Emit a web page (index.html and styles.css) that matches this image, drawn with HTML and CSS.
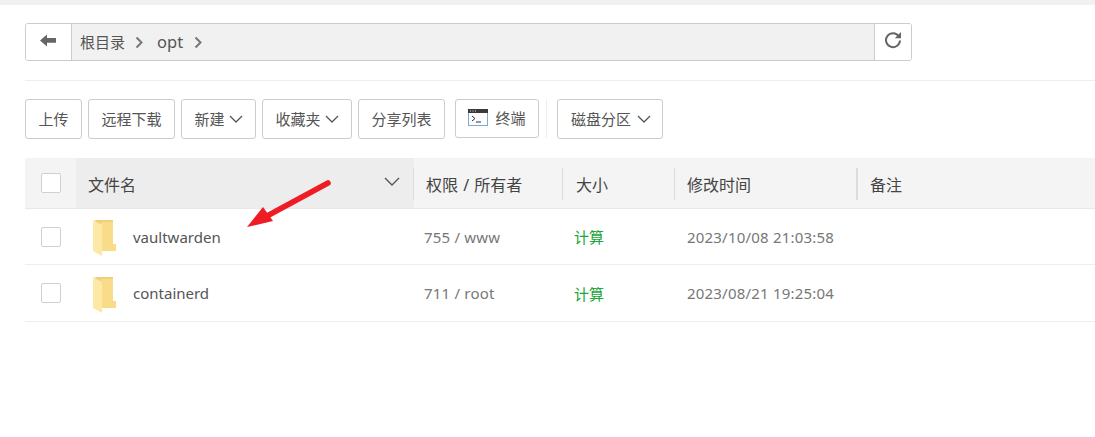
FILE: index.html
```html
<!DOCTYPE html>
<html lang="zh-CN">
<head>
<meta charset="UTF-8">
<meta name="viewport" content="width=device-width, initial-scale=1.0">
<title>文件管理</title>
<link rel="stylesheet" href="styles.css">
</head>
<body>

<div class="top-strip"></div>

<main class="files">
    <div class="path-row">
        <div class="path-box">
            <button class="path-back" aria-label="返回">
                <svg width="16" height="13" viewBox="0 0 16 13"><path d="M0 6.500 7 .5v3.600h9v4.600H7v3.800z" fill="#666"/></svg>
            </button>
            <div class="path-crumbs">
                <span class="crumb">根目录</span>
                <svg class="crumb-sep" width="9" height="13" viewBox="0 0 9 13"><path d="M1.500 1.500 6.500 6.500l-5 5" fill="none" stroke="#777" stroke-width="2"/></svg>
                <span class="crumb crumb-en">opt</span>
                <svg class="crumb-sep" width="9" height="13" viewBox="0 0 9 13"><path d="M1.500 1.500 6.500 6.500l-5 5" fill="none" stroke="#777" stroke-width="2"/></svg>
            </div>
            <button class="path-refresh" aria-label="刷新">
                <svg width="18" height="18" viewBox="0 0 18 18"><path d="M14.800 5.200A7 7 0 1 0 16 9.500" fill="none" stroke="#666" stroke-width="2"/><path d="M17 1v6.200h-6.200z" fill="#666"/></svg>
            </button>
        </div>
    </div>

    <div class="toolbar">
        <button class="btn btn-upload">上传</button>
        <button class="btn btn-remote">远程下载</button>
        <button class="btn btn-new">新建<svg class="caret" width="14" height="8" viewBox="0 0 14 8"><path d="M1 1l6 6 6-6" fill="none" stroke="#555" stroke-width="1.300"/></svg></button>
        <button class="btn btn-fav">收藏夹<svg class="caret" width="14" height="8" viewBox="0 0 14 8"><path d="M1 1l6 6 6-6" fill="none" stroke="#555" stroke-width="1.300"/></svg></button>
        <button class="btn btn-share">分享列表</button>
        <button class="btn btn-term">
            <svg width="20" height="17" viewBox="0 0 20 17"><rect x=".5" y=".5" width="19" height="16" fill="#fdfdfd" stroke="#7fa9d3"/><rect x="0" y="0" width="20" height="4" fill="#3a3a3a"/><path d="M2 2h1M4.500 2h1M7 2h1" stroke="#ddd" stroke-width="1"/><path d="M4 7l3 2.500L4 12" fill="none" stroke="#333" stroke-width="1"/><path d="M8 13h5" stroke="#333" stroke-width="1"/></svg>
            终端
        </button>
        <span class="toolbar-sep"></span>
        <button class="btn btn-disk">磁盘分区<svg class="caret caret-wide" width="14" height="8" viewBox="0 0 14 8"><path d="M1 1l6 6 6-6" fill="none" stroke="#555" stroke-width="1.300"/></svg></button>
    </div>

    <div class="file-table">
        <div class="row row-head">
            <div class="cell cell-check"><span class="check"></span></div>
            <div class="cell cell-name"><span class="head-label">文件名</span><svg class="sort" width="16" height="9" viewBox="0 0 16 9"><path d="M1 1l7 7 7-7" fill="none" stroke="#555" stroke-width="1.400"/></svg></div>
            <div class="cell cell-perm"><span class="head-label">权限 / 所有者</span></div>
            <div class="cell cell-size"><span class="head-label">大小</span></div>
            <div class="cell cell-time"><span class="head-label">修改时间</span></div>
            <div class="cell cell-note"><span class="head-label">备注</span></div>
        </div>
        <div class="row">
            <div class="cell cell-check"><span class="check"></span></div>
            <div class="cell cell-name">
                <svg class="folder" width="25" height="37" viewBox="0 0 25 37"><path d="M3 1h18v24h3v7H9z" fill="#f0cf78"/><path d="M9 3h12v22h3v7H9z" fill="#f9dc8a"/><path d="M1 1l9 5v31l-9-5z" fill="#fde9a6"/></svg>
                vaultwarden
            </div>
            <div class="cell cell-perm">755 / www</div>
            <div class="cell cell-size"><span class="calc">计算</span></div>
            <div class="cell cell-time">2023/10/08 21:03:58</div>
            <div class="cell cell-note"></div>
        </div>
        <div class="row">
            <div class="cell cell-check"><span class="check"></span></div>
            <div class="cell cell-name">
                <svg class="folder" width="25" height="37" viewBox="0 0 25 37"><path d="M3 1h18v24h3v7H9z" fill="#f0cf78"/><path d="M9 3h12v22h3v7H9z" fill="#f9dc8a"/><path d="M1 1l9 5v31l-9-5z" fill="#fde9a6"/></svg>
                containerd
            </div>
            <div class="cell cell-perm">711 / root</div>
            <div class="cell cell-size"><span class="calc">计算</span></div>
            <div class="cell cell-time">2023/08/21 19:25:04</div>
            <div class="cell cell-note"></div>
        </div>
    </div>
</main>

<!-- annotation drawn over the screenshot -->
<svg class="arrow" width="90" height="55" viewBox="0 0 90 55"><path d="M81 5 20 38" stroke="#ee1c25" stroke-width="5.500" stroke-linecap="round" fill="none"/><path d="M0 49 16 29 26 43z" fill="#ee1c25"/></svg>

</body>
</html>
```

FILE: styles.css
```css
* {
    box-sizing: border-box;
}
html, body {
    height: 100%;
}
body {
    margin: 0;
    background: #fff;
    color: #555;
    font-family: "Noto Sans", "Noto Sans CJK SC", sans-serif;
    font-size: 15px;
    overflow: hidden;
    position: relative;
}
button {
    font: inherit;
    color: inherit;
    cursor: pointer;
}
.top-strip {
    height: 5px;
    background: #f1f1f1;
}
.files {
    padding: 18px 0 0 25px;
}
.path-row {
    padding-bottom: 19px;
    border-bottom: 1px solid #eee;
}
.path-box {
    display: flex;
    width: 887px;
    height: 38px;
    border: 1px solid #ccc;
    border-radius: 3px;
    overflow: hidden;
}
.path-back {
    width: 46px;
    padding: 0 2px 2px 0;
    border: none;
    border-right: 1px solid #ccc;
    background: #fff;
}
.path-crumbs {
    flex: 1;
    display: flex;
    align-items: center;
    padding-left: 8px;
    background: #f1f1f1;
    line-height: 38px;
}
.crumb-en {
    font-size: 16.500px;
}
.crumb-sep {
    margin: 0 13px 0 10px;
}
.crumb-en + .crumb-sep {
    margin-left: 11px;
}
.path-refresh {
    width: 37px;
    padding: 0 0 1px;
    border: none;
    border-left: 1px solid #ccc;
    background: #fff;
}
.toolbar {
    display: flex;
    align-items: flex-start;
    height: 40px;
    margin-top: 18px;
}
.btn {
    display: flex;
    align-items: center;
    justify-content: center;
    height: 40px;
    padding: 0 0 2px;
    margin-right: 6px;
    border: 1px solid #ccc;
    border-radius: 3px;
    background: #fff;
    color: #555;
}
.btn-upload { width: 57px; }
.btn-remote { width: 87px; }
.btn-new { width: 75px; }
.btn-fav { width: 90px; }
.btn-share { width: 87px; margin-right: 10px; }
.btn-term { width: 84px; height: 39px; gap: 7px; margin-right: 7px; }
.btn-disk { width: 106px; padding-left: 2px; }
.caret {
    margin: 2px 0 0 4px;
}
.caret-wide {
    margin-left: 6px;
}
.toolbar-sep {
    width: 1px;
    height: 39px;
    margin-right: 10px;
    background: #eee;
}
.file-table {
    margin-top: 19px;
}
.row {
    display: flex;
    height: 57px;
    border-bottom: 1px solid #eee;
}
.row:nth-child(2) {
    height: 56px;
}
.row-head {
    height: 51px;
    background: #f4f4f4;
    border-bottom: 1px solid #e8e8e8;
    color: #444;
    font-size: 16px;
}
.head-label {
    padding-top: 2px;
    word-spacing: 1px;
}
.cell {
    display: flex;
    align-items: center;
    flex-shrink: 0;
}
.cell-check { width: 51px; padding-left: 16px; }
.cell-name { width: 338px; padding-left: 16px; }
.cell-perm { width: 149px; padding-left: 10px; letter-spacing: 0.2px; }
.cell-size { width: 112px; padding-left: 11px; }
.cell-time { width: 182px; padding-left: 12px; letter-spacing: 0.2px; }
.cell-note { flex: 1; padding-left: 13px; }
.row-head .cell-name {
    position: relative;
    padding-left: 12px;
    background: #ededed;
}
.row-head .cell-perm,
.row-head .cell-size,
.row-head .cell-time,
.row-head .cell-note {
    position: relative;
    padding-left: 12px;
    letter-spacing: normal;
}
.row-head .cell-size { padding-left: 13px; }
.row-head .cell-note { padding-left: 13px; }
.row-head .cell-perm::before,
.row-head .cell-size::before,
.row-head .cell-time::before,
.row-head .cell-note::before {
    content: "";
    position: absolute;
    left: -1px;
    top: 10px;
    bottom: 8px;
    width: 1px;
    background: #ddd;
}
.row-head .cell-note::before {
    width: 2px;
}
.sort {
    margin-left: auto;
    margin-right: 14px;
    margin-bottom: 3px;
}
.check {
    display: block;
    width: 20px;
    height: 20px;
    border: 1px solid #d0d0d0;
    border-radius: 2px;
    background: #fff;
}
.folder {
    margin: 2px 16px 0 0;
    flex-shrink: 0;
}
.row:not(.row-head) .cell-perm,
.row:not(.row-head) .cell-time {
    color: #777;
}
.calc {
    color: #20a53a;
}
.arrow {
    position: absolute;
    left: 247px;
    top: 178px;
}
```
